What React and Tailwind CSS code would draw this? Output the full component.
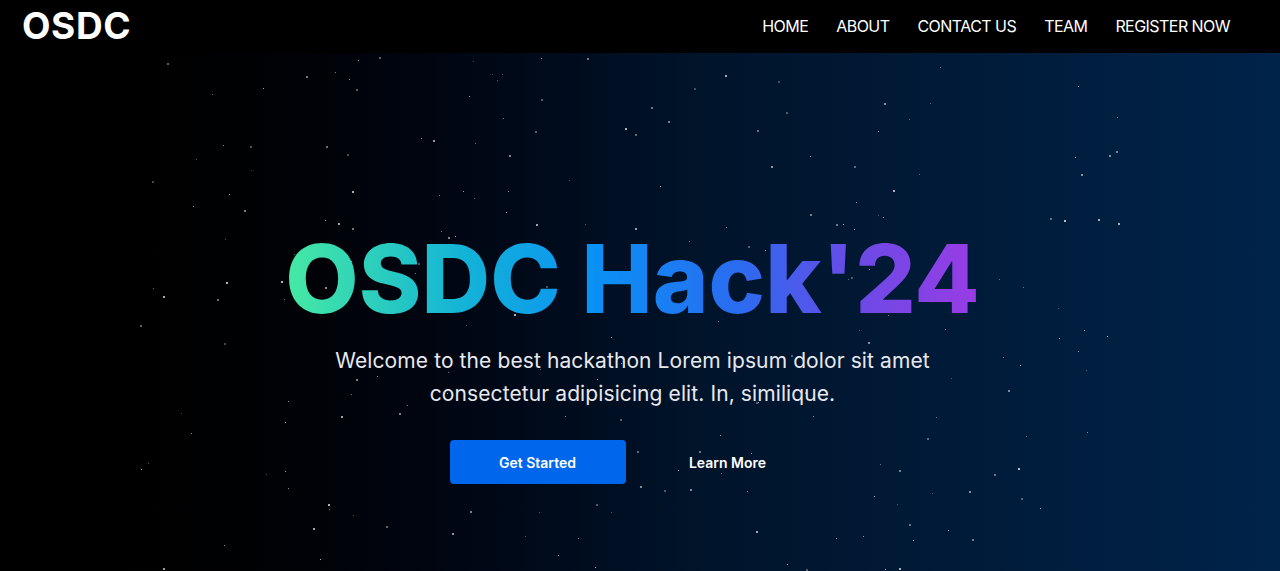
import React from 'react';

// deterministic star field
const makeStars = (count, seed) => {
    let s = seed;
    const rand = () => {
        s = (s * 16807) % 2147483647;
        return (s - 1) / 2147483646;
    };
    const stars = [];
    for (let i = 0; i < count; i++) {
        const x = 140 + rand() * 980;
        const y = rand() * 518;
        const big = rand() > 0.6;
        stars.push({ x, y, size: big ? 2 : 1, opacity: 0.35 + rand() * 0.6 });
    }
    return stars;
};

const stars = makeStars(230, 42);

const navLinks = ['HOME', 'ABOUT', 'CONTACT US', 'TEAM', 'REGISTER NOW'];

const App = () => {
    return (
        <div className="min-h-[571px] bg-black font-['Inter','Liberation_Sans',sans-serif] text-white">
            <header className="flex h-[53px] items-center justify-between bg-black pb-[2px] pl-[22px] pr-[50px]">
                <a href="#" className="text-[37px] font-bold leading-none tracking-[0.6px] text-white">
                    OSDC
                </a>
                <nav className="flex items-center gap-[28px] text-[16px] font-normal">
                    {navLinks.map((link) => (
                        <a key={link} href="#" className="text-white tracking-[-0.55px]">
                            {link}
                        </a>
                    ))}
                </nav>
            </header>

            <section className="relative h-[518px] overflow-hidden bg-gradient-to-r from-[#000000] via-[#00142b] via-55% to-[#00234a]">
                {stars.map((st, i) => (
                    <span
                        key={i}
                        className="absolute rounded-full bg-white"
                        style={{ left: st.x, top: st.y, width: st.size, height: st.size, opacity: st.opacity }}
                    />
                ))}

                <div className="relative flex flex-col items-center pr-[15px] pt-[173px]">
                    <h1 className="bg-[linear-gradient(90deg,#46eaa2_0%,#14b4d6_25%,#0a90f5_45%,#2a6cf0_65%,#6a4ae6_82%,#9a3ce4_100%)] bg-clip-text text-[95px] font-extrabold leading-[106px] text-transparent">
                        OSDC Hack'24
                    </h1>
                    <p className="mt-[12px] text-center text-[21px] leading-[33px] tracking-[0.1px] text-[#e8e8ee]">
                        Welcome to the best hackathon Lorem ipsum dolor sit amet
                        <br />
                        consectetur adipisicing elit. In, similique.
                    </p>
                    <div className="mt-[30px] flex gap-[14px]">
                        <button className="h-[44px] w-[176px] rounded-[4px] bg-[#0066eb] text-[14px] font-semibold text-white">
                            Get Started
                        </button>
                        <button className="h-[44px] w-[176px] text-[14px] font-semibold text-white">
                            Learn More
                        </button>
                    </div>
                </div>
            </section>
        </div>
    );
};

export default App;
